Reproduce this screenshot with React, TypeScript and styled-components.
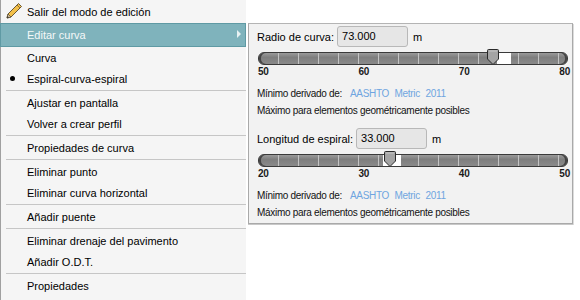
import styled, { createGlobalStyle } from 'styled-components';

const GlobalStyle = createGlobalStyle`
  html, body {
    margin: 0;
    padding: 0;
    background: #ffffff;
  }
  body {
    font-family: "Liberation Sans", Arial, sans-serif;
    font-size: 11px;
    color: #000;
  }
`;

const ScPage = styled.div`
  display: flex;
  align-items: flex-start;
  gap: 2px;
  width: 580px;
  height: 300px;
  overflow: hidden;
`;

const ScMenu = styled.div`
  width: 245px;
  height: 300px;
  background: #f5f5f5;
  border-left: 1px solid #a0a0a0;
  display: flex;
  flex-direction: column;
`;

const ScItem = styled.div<{ $active?: boolean; $tall?: boolean }>`
  position: relative;
  display: flex;
  align-items: center;
  height: ${p => (p.$tall ? 23 : p.$active ? 22 : 21)}px;
  padding-left: 26px;
  font-size: 11px;
  letter-spacing: 0;
  color: ${p => (p.$active ? '#f4f8f8' : '#000')};
  background: ${p => (p.$active ? '#7fb3bc' : 'transparent')};
  border: ${p => (p.$active ? '1px solid #5f9aa4' : 'none')};
  margin-left: ${p => (p.$active ? '-1px' : '0')};
`;

const ScIconSlot = styled.span`
  position: absolute;
  left: 4px;
  top: 2px;
  width: 18px;
  height: 18px;
`;

const ScBullet = styled.span`
  position: absolute;
  left: 9px;
  top: 8px;
  width: 5px;
  height: 5px;
  border-radius: 50%;
  background: #000;
`;

const ScArrow = styled.span`
  position: absolute;
  right: 4px;
  top: 6px;
  width: 0;
  height: 0;
  border-top: 4px solid transparent;
  border-bottom: 4px solid transparent;
  border-left: 4px solid #e8f2f3;
`;

const ScSeparator = styled.div`
  height: 3px;
  display: flex;
  align-items: center;
  padding-left: 5px;

  &::after {
    content: '';
    flex: 1;
    height: 1px;
    background: #c6c6c6;
  }
`;

const ScPanel = styled.div`
  margin-top: 23px;
  width: 325px;
  height: 201px;
  background: #f2f2f2;
  border: 1px solid #a9a9a9;
  border-top-color: #b4b4b4;
  box-shadow: 0 1px 0 #c8c8c8, 1px 1px 0 #dcdcdc;
  padding: 2px 8px 0 9px;
  box-sizing: border-box;
  display: flex;
  flex-direction: column;
`;

const ScField = styled.div<{ $gap?: number }>`
  display: flex;
  align-items: center;
  gap: 3px;
  margin-top: ${p => p.$gap ?? 0}px;
  margin-left: -1px;
  font-size: 11px;
`;

const ScInput = styled.div`
  width: 65px;
  height: 19px;
  line-height: 19px;
  padding-left: 4px;
  background: #e6e6e6;
  border: 1px solid #b8b8b8;
  border-radius: 3px;
  margin-right: 2px;
`;

const ScTrack = styled.div`
  position: relative;
  margin-top: 5px;
  width: 308px;
  height: 11px;
  border: 1px solid #3a3a3a;
  border-radius: 6px;
  background:
    repeating-linear-gradient(to right, transparent 0 19px, #c4c4c4 19px 20px),
    linear-gradient(#9a9a9a, #7e7e7e 40%, #8a8a8a);
  box-shadow: inset 2px 0 0 #444, inset -2px 0 0 #444;
`;

const ScWhite = styled.div`
  position: absolute;
  top: 0;
  bottom: 0;
  background: #ffffff;
`;

const ScThumb = styled.svg`
  position: absolute;
  top: -4px;
`;

const ScTicks = styled.div`
  display: flex;
  justify-content: space-between;
  width: 312px;
  margin-top: 1px;
  font-size: 10px;
  font-weight: bold;
  color: #1a1a1a;
  letter-spacing: -0.2px;
`;

const ScNote = styled.div<{ $gap?: number }>`
  display: flex;
  gap: 8px;
  margin-top: ${p => p.$gap ?? 0}px;
  margin-left: -1px;
  font-size: 10px;
  letter-spacing: -0.3px;
  color: #111;
`;

const ScLink = styled.span`
  color: #6fa5e0;
  word-spacing: 3px;
`;

function Pencil() {
  return (
    <svg width="18" height="18" viewBox="0 0 18 18">
      <path d="M13.5 1.5 L16.5 4.5 L6 15 L2 16 L3 12 Z" fill="#f3c04a" stroke="#5a4a2a" strokeWidth="0.9" />
      <path d="M12 3 L15 6" stroke="#8a6a2a" strokeWidth="0.9" />
      <path d="M3 12 L6 15" stroke="#b8a080" strokeWidth="0.8" />
      <path d="M2 16 L3 12 L6 15 Z" fill="#d9c7a6" stroke="#5a4a2a" strokeWidth="0.7" />
      <path d="M2 16 L2.5 14 L4 15.5 Z" fill="#333" />
    </svg>
  );
}

function Slider({ min, max, value, ticks, white }: { min: number; max: number; value: number; ticks: string[]; white: [number, number] }) {
  const pos = ((value - min) / (max - min)) * 308;
  return (
    <>
      <ScTrack>
        <ScWhite style={{ left: white[0], width: white[1] - white[0] }} />
        <ScThumb width="14" height="17" viewBox="0 0 14 17" style={{ left: pos - 9 }}>
          <path d="M1.5 1.5 Q1.5 0.5 2.5 0.5 L11.5 0.5 Q12.5 0.5 12.5 1.5 L12.5 10 L7 15.5 L1.5 10 Z" fill="#a4a4a4" stroke="#2a2a2a" strokeWidth="1" />
          <path d="M3 2 L11 2" stroke="#c8c8c8" strokeWidth="1" />
        </ScThumb>
      </ScTrack>
      <ScTicks>
        {ticks.map(t => <span key={t}>{t}</span>)}
      </ScTicks>
    </>
  );
}

const menu: Array<{ label?: string; sep?: boolean; bullet?: boolean }> = [
  { label: 'Curva' },
  { label: 'Espiral-curva-espiral', bullet: true },
  { sep: true },
  { label: 'Ajustar en pantalla' },
  { label: 'Volver a crear perfil' },
  { sep: true },
  { label: 'Propiedades de curva' },
  { sep: true },
  { label: 'Eliminar punto' },
  { label: 'Eliminar curva horizontal' },
  { sep: true },
  { label: 'Añadir puente' },
  { sep: true },
  { label: 'Eliminar drenaje del pavimento' },
  { label: 'Añadir O.D.T.' },
  { sep: true },
  { label: 'Propiedades' },
];

export default function App() {
  return (
    <>
      <GlobalStyle />
      <ScPage>
        <ScMenu>
          <ScItem $tall>
            <ScIconSlot><Pencil /></ScIconSlot>
            Salir del modo de edición
          </ScItem>
          <ScItem $active>
            Editar curva
            <ScArrow />
          </ScItem>
          {menu.map((m, i) =>
            m.sep ? (
              <ScSeparator key={i} />
            ) : (
              <ScItem key={i}>
                {m.bullet && <ScBullet />}
                {m.label}
              </ScItem>
            )
          )}
        </ScMenu>

        <ScPanel>
          <ScField>
            Radio de curva:
            <ScInput>73.000</ScInput>
            m
          </ScField>
          <Slider min={50} max={80} value={73} ticks={['50', '60', '70', '80']} white={[238, 252]} />
          <ScNote $gap={11}>
            <span>Mínimo derivado de:</span>
            <ScLink>AASHTO Metric 2011</ScLink>
          </ScNote>
          <ScNote $gap={6}>Máximo para elementos geométricamente posibles</ScNote>

          <ScField $gap={12}>
            Longitud de espiral:
            <ScInput>33.000</ScInput>
            m
          </ScField>
          <Slider min={20} max={50} value={33} ticks={['20', '30', '40', '50']} white={[124, 142]} />
          <ScNote $gap={11}>
            <span>Mínimo derivado de:</span>
            <ScLink>AASHTO Metric 2011</ScLink>
          </ScNote>
          <ScNote $gap={6}>Máximo para elementos geométricamente posibles</ScNote>
        </ScPanel>
      </ScPage>
    </>
  );
}
